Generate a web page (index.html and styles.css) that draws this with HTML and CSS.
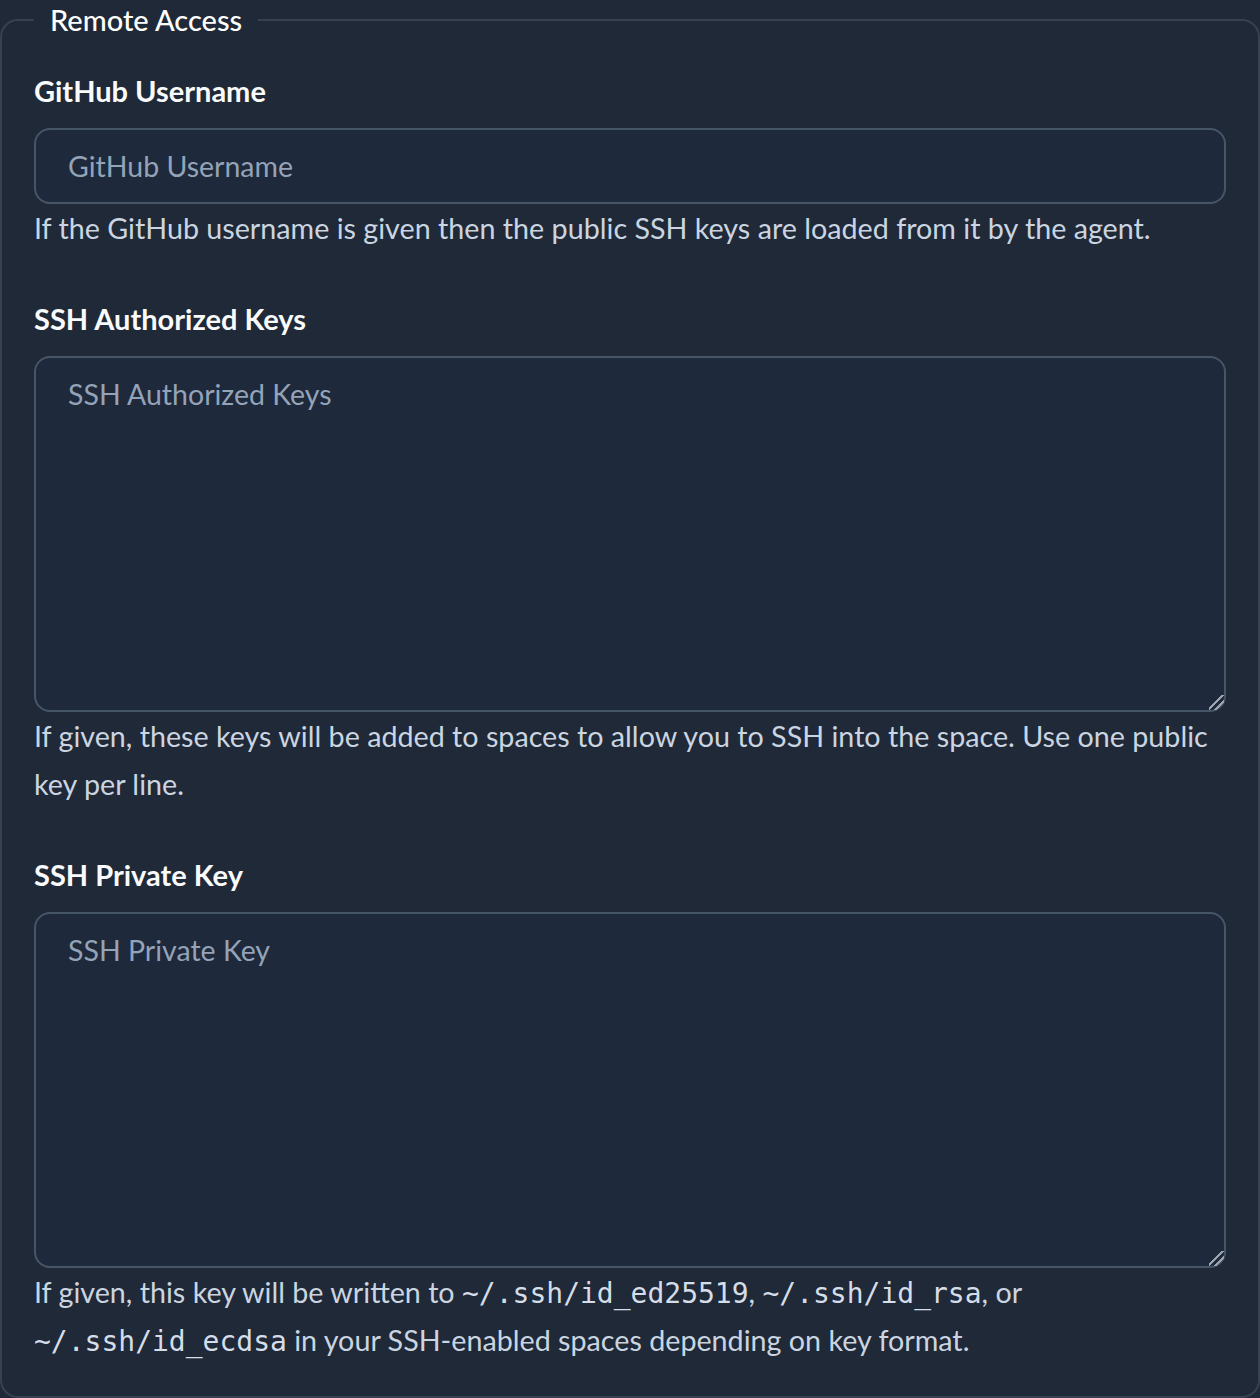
FILE: index.html
```html
<!DOCTYPE html>
<html lang="en">
<head>
<meta charset="utf-8">
<title>Remote Access</title>
<link rel="stylesheet" href="styles.css">
</head>
<body>
<fieldset class="panel">
  <legend class="panel-title">Remote Access</legend>
  <div class="field">
    <label class="field-label" for="gh">GitHub Username</label>
    <input class="control" id="gh" type="text" placeholder="GitHub Username">
    <p class="help">If the GitHub username is given then the public SSH keys are loaded from it by the agent.</p>
  </div>
  <div class="field">
    <label class="field-label" for="ak">SSH Authorized Keys</label>
    <textarea class="control area" id="ak" placeholder="SSH Authorized Keys"></textarea>
    <p class="help">If given, these keys will be added to spaces to allow you to SSH into the space. Use one public key per line.</p>
  </div>
  <div class="field last">
    <label class="field-label" for="pk">SSH Private Key</label>
    <textarea class="control area" id="pk" placeholder="SSH Private Key"></textarea>
    <p class="help">If given, this key will be written to <code class="mono">~/.ssh/id_ed25519</code>, <code class="mono">~/.ssh/id_rsa</code>, or <code class="mono">~/.ssh/id_ecdsa</code> in your SSH-enabled spaces depending on key format.</p>
  </div>
</fieldset>
</body>
</html>
```
FILE: styles.css
```css
html, body {
  margin: 0;
  padding: 0;
  background: #1f2937;
}
body {
  font-family: Lato, "Noto Sans", sans-serif;
  color: #f3f4f6;
}
.panel {
  margin: 0;
  min-width: 0;
  box-sizing: border-box;
  width: 1260px;
  height: 1398px;
  border: 2px solid #374151;
  border-radius: 18px;
  padding: 31px 32px 32px 32px;
  background: #1f2937;
}
.panel-title {
  padding: 0 16px;
  font-size: 29px;
  line-height: 40px;
  font-weight: 500;
  color: #ffffff;
}
.field {
  display: flex;
  flex-direction: column;
  margin-bottom: 47px;
}
.field.last { margin-bottom: 0; }
.field-label {
  font-size: 29px;
  line-height: 40px;
  font-weight: 700;
  color: #f9fafb;
  margin-bottom: 17px;
}
.control {
  box-sizing: border-box;
  width: 100%;
  margin: 0;
  height: 76px;
  padding: 16px 32px;
  font-family: Lato, "Noto Sans", sans-serif;
  font-size: 28.5px;
  line-height: 40px;
  color: #e5e7eb;
  background: #1e293b;
  border: 2px solid #475569;
  border-radius: 16px;
  outline: none;
}
.control::placeholder { color: #94a3b8; opacity: 1; }
.area {
  height: 356px;
  resize: vertical;
  display: block;
}
.area::-webkit-resizer {
  background: linear-gradient(135deg,
    transparent 0, transparent 42%,
    #9ca3af 42%, #9ca3af 52%,
    transparent 52%, transparent 66%,
    #9ca3af 66%, #9ca3af 76%,
    transparent 76%);
}
.help {
  margin: 0;
  font-size: 28.7px;
  line-height: 48px;
  color: #cbd5e1;
}
.mono {
  font-family: "DejaVu Sans Mono", "Liberation Mono", monospace;
  font-size: 28px;
  line-height: 1;
  color: #d5dde8;
}
```
